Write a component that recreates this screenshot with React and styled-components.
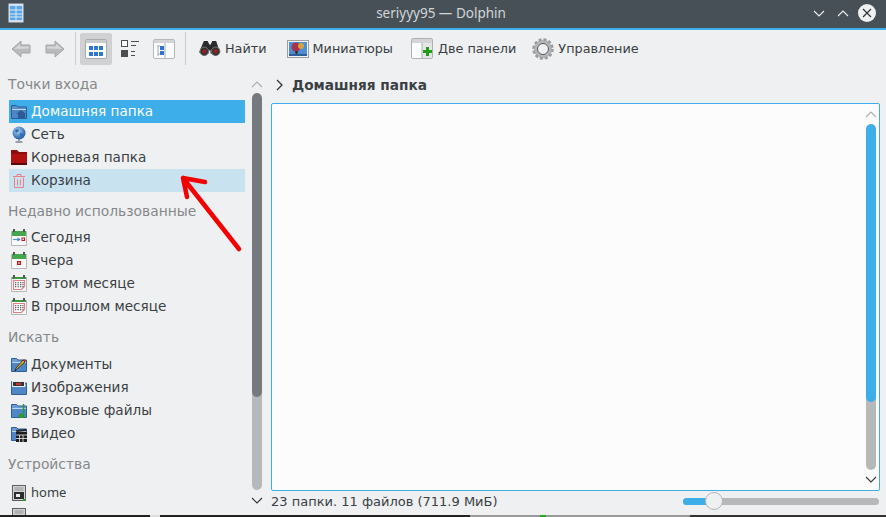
import React from "react";
import styled, { createGlobalStyle } from "styled-components";

const Global = createGlobalStyle`
  html, body { margin: 0; padding: 0; background: #eff0f1; overflow: hidden; }
  * { box-sizing: border-box; }
`;

const Page = styled.div`
  width: 886px; height: 517px; display: flex; flex-direction: column; overflow: hidden;
  font-family: "DejaVu Sans", "Noto Sans", sans-serif; font-size: 13px; color: #3a3f44;
`;
const Window = styled.div`
  position: relative; height: 515px; display: flex; flex-direction: column; background: #eff0f1;
`;
const TitleBar = styled.header`
  height: 30px; flex: none; display: flex; align-items: center; padding: 0 10px 2px 8px;
  background: #475057; border-bottom: 2px solid #3daee9;
`;
const Title = styled.div`
  flex: 1; text-align: center; color: #d3d6d8; font-family: "Noto Sans", sans-serif; font-size: 13.5px; padding-left: 45px;
`;
const WinControls = styled.div`display: flex; align-items: center; gap: 9px;`;
const ChevPair = styled.div`display: flex; align-items: center; gap: 12px;`;
const CloseBtn = styled.div`
  width: 18px; height: 18px; border-radius: 50%; background: #eff0f1;
  display: flex; align-items: center; justify-content: center;
`;
const Toolbar = styled.nav`
  height: 37px; flex: none; display: flex; align-items: center; padding: 0 0 0 11px; font-size: 12.8px;
`;
const NavBtn = styled.div`
  width: 20px; height: 20px; margin-right: ${p => p.$mr}px; display: flex; align-items: center;
`;
const Sep = styled.div`width: 1px; height: 33px; background: #c8cacc; margin: 0 ${p => p.$r}px 0 ${p => p.$l}px;`;
const ViewBtn = styled.div`
  width: 32px; height: 32px; border-radius: 2px; display: flex; align-items: center; justify-content: center;
  background: ${p => p.$active ? "#d0d1d3" : "transparent"}; margin-right: ${p => p.$mr}px;
`;
const TextBtn = styled.div`
  display: flex; align-items: center; gap: ${p => p.$gap}px; margin-right: ${p => p.$mr}px; white-space: nowrap;
`;
const BtnLabel = styled.span`padding-bottom: 1px;`;
const Body = styled.div`flex: 1; min-height: 0; display: flex; padding-top: 8px;`;
const Sidebar = styled.aside`
  width: 250px; flex: none; padding-left: 8px; padding-right: 5px; overflow: hidden;
`;
const Heading = styled.div`
  height: ${p => p.$h}px; line-height: 18px; padding-top: ${p => p.$pt}px; color: #85888b; font-size: 13.85px;
`;
const Row = styled.div`
  height: 23px; display: flex; align-items: center; gap: 4px; margin-left: 1px; padding-left: 2px; white-space: nowrap;
  font-family: ${p => p.$latin ? '"Noto Sans", sans-serif' : "inherit"};
  font-size: ${p => p.$latin ? 13 : 13.6}px;
  background: ${p => p.$sel ? "#3daee9" : p.$hover ? "#c9e2f0" : "transparent"};
  color: ${p => p.$sel ? "#fcfcfc" : "#3a3f44"};
`;
const RowLabel = styled.span`padding-bottom: 2px;`;
const ScrollCol = styled.div`
  width: ${p => p.$w}px; flex: none; display: flex; flex-direction: column; align-items: center;
  margin-top: ${p => p.$mt || 0}px;
`;
const Arrow = styled.div`
  height: ${p => p.$h}px; padding-bottom: ${p => p.$pb || 0}px; flex: none; display: flex; align-items: center; justify-content: center;
`;
const Track = styled.div`
  flex: 1; width: 10px; border-radius: 5px; background: #b7b8ba; overflow: hidden;
`;
const Thumb = styled.div`
  width: 10px; height: ${p => p.$h}px; border-radius: 5px; background: ${p => p.$c};
`;
const Main = styled.main`
  width: 609px; flex: none; margin-left: 7px; padding-top: 1px; display: flex; flex-direction: column;
`;
const PathBar = styled.div`
  height: 18px; flex: none; display: flex; align-items: center; gap: 9px; padding-left: 5px; margin-bottom: 9px;
  font-weight: 700; font-size: 13.7px; color: #3a3f44;
`;
const Frame = styled.div`
  height: 388px; flex: none; background: #fcfcfc; border: 1px solid #3daee9; border-radius: 2px;
  display: flex; justify-content: flex-end; padding: 1px 0 1px 0;
`;
const Status = styled.div`height: 20px; flex: none; display: flex; align-items: center; padding-right: 1px;`;
const StatusText = styled.div`flex: 1;`;
const Slider = styled.div`position: relative; width: 196px; height: 7px; border-radius: 4px; background: #b7b8ba;`;
const SliderFill = styled.div`width: 26px; height: 7px; border-radius: 4px 0 0 4px; background: #3daee9;`;
const Knob = styled.div`
  position: absolute; left: 22px; top: -6px; width: 18px; height: 18px; border-radius: 50%;
  background: #eff0f1; border: 1px solid #b3b5b6;
`;
const Overlay = styled.svg`position: absolute; left: 175px; top: 170px; pointer-events: none;`;
const Strip = styled.div`
  flex: 1; background: linear-gradient(90deg, #222 0 150px, #ddd 150px 160px, #222 160px 470px, #999 470px 540px, #2a2 540px 546px, #999 546px 690px, #333 690px 886px);
`;

const Chev = ({ up, c = "#31363b", w = 12 }) => (
  <svg width={w} height="7" viewBox="0 0 12 7"><path d={up ? "M1 6L6 1l5 5" : "M1 1l5 5 5-5"} fill="none" stroke={c} strokeWidth="1.1" /></svg>
);
const NavArrow = ({ flip }) => (
  <svg width="20" height="18" viewBox="0 0 20 18" style={{ transform: flip ? "scaleX(-1)" : "none" }}>
    <path d="M1 9L10 1v4h9v8h-9v4z" fill="#b9babb" stroke="#a5a6a8" strokeWidth="1" />
    <path d="M3 9l6-5v2.500h9v2z" fill="#d6d7d8" />
  </svg>
);
const IconsView = () => (
  <svg width="22" height="20" viewBox="0 0 22 20">
    <rect x=".5" y=".5" width="21" height="19" rx="1.500" fill="#fcfcfc" stroke="#a9abad" />
    <rect x="1" y="1" width="20" height="3" fill="#c9cbcd" />
    {[4, 9, 14].map(x => [7, 13].map(y => <rect key={x + "" + y} x={x} y={y} width="4" height="4" fill="#2f76d2" />))}
  </svg>
);
const DetailsView = () => (
  <svg width="18" height="18" viewBox="0 0 18 18">
    <rect x=".5" y=".5" width="6" height="6" fill="#fcfcfc" stroke="#4d4d4d" />
    <rect x="0" y="10" width="7" height="7" fill="#4d4d4d" />
    <path d="M10 1.500h8M10 5.500h5M10 11.500h4M10 15.500h4" stroke="#4d4d4d" strokeWidth="1" />
  </svg>
);
const ColumnsView = () => (
  <svg width="22" height="20" viewBox="0 0 22 20">
    <rect x=".5" y=".5" width="21" height="19" rx="1.500" fill="#fcfcfc" stroke="#b5b7b9" />
    <rect x="1" y="1" width="20" height="3" fill="#d4d5d7" />
    <path d="M5 6v11M5 7h2M5 15h2M12 4v15" stroke="#a9abad" fill="none" />
    <rect x="7" y="7" width="4" height="4" fill="#2f76d2" /><rect x="7" y="12" width="4" height="4" fill="#2f76d2" />
  </svg>
);
const Binoculars = () => (
  <svg width="22" height="17" viewBox="0 0 23 18">
    <path d="M5 1h4l2 4h1l2-4h4l4 12-5 4-5-3v-3h-2v3l-5 3-5-4z" fill="#2b2b2e" />
    <circle cx="5.500" cy="12" r="4.500" fill="#333" stroke="#777" /><circle cx="17.500" cy="12" r="4.500" fill="#333" stroke="#777" />
    <circle cx="5.500" cy="12" r="2.200" fill="#a11c22" /><circle cx="17.500" cy="12" r="2.200" fill="#a11c22" />
  </svg>
);
const Preview = () => (
  <svg width="22" height="18" viewBox="0 0 22 18">
    <rect x=".5" y=".5" width="21" height="17" fill="#f4f4f4" stroke="#9c9ea0" />
    <rect x="2" y="2" width="18" height="14" fill="#4a8fd6" />
    <circle cx="9" cy="7" r="4.500" fill="#a8324a" /><circle cx="14" cy="6" r="3" fill="#d8a13c" />
    <path d="M8 11l1 5h1l1-5" fill="#3a2a2a" /><path d="M2 14h18v2H2z" fill="#2f5f96" />
  </svg>
);
const TwoPanels = () => (
  <svg width="22" height="22" viewBox="0 0 22 22">
    <rect x=".5" y=".5" width="21" height="20" rx="1.500" fill="#fcfcfc" stroke="#aeb0b2" />
    <rect x="1" y="1" width="20" height="4" fill="#d4d5d7" /><rect x="11" y="5" width="10" height="15" fill="#e4e5e6" />
    <path d="M11 5v15" stroke="#aeb0b2" />
    <path d="M15 9h3v3h3v3h-3v3h-3v-3h-3v-3h3z" fill="#1f9d18" />
  </svg>
);
const Gear = () => (
  <svg width="22" height="22" viewBox="0 0 22 22">
    <circle cx="11" cy="11" r="7.500" fill="none" stroke="#b4b6b8" strokeWidth="3.500" />
    <circle cx="11" cy="11" r="9.500" fill="none" stroke="#9a9c9e" strokeWidth="2.500" strokeDasharray="3 2" />
    <circle cx="11" cy="11" r="5.500" fill="none" stroke="#55585a" strokeWidth="1" />
  </svg>
);
const Folder = ({ children, c = "#6a9dd6", d = "#2f5f96" }) => (
  <svg width="16" height="16" viewBox="0 0 16 16">
    <path d="M.5 1.500h5l1.500 1.500h8.500v11.500H.500z" fill={c} stroke={d} />
    <path d="M1 6h14v8H1z" fill="#4f86c6" />
    <path d="M1 5.500h14" stroke="#bcd8ef" />
    {children}
  </svg>
);
const HomeIcon = () => <Folder c="#5a8fca" d="#2c5a92"><path d="M10 6l5 4h-1v4H7v-4H5z" fill="#2c5a92" /></Folder>;
const Globe = () => (
  <svg width="16" height="17" viewBox="0 0 16 17">
    <defs><radialGradient id="g" cx=".4" cy=".35" r=".7"><stop offset="0" stopColor="#a9d2f3" /><stop offset="1" stopColor="#17509c" /></radialGradient></defs>
    <circle cx="8" cy="7" r="6.500" fill="url(#g)" />
    <path d="M4 4l3-1 1 2-3 2zM9 7l3 1-1 3-2-1z" fill="#2a6fb4" />
    <path d="M8 13v2M4.500 16h7" stroke="#7a8794" strokeWidth="1.500" />
  </svg>
);
const RedFolder = () => (
  <svg width="16" height="15" viewBox="0 0 16 15">
    <path d="M0 0h6l2 2h8v13H0z" fill="#8d0d0d" /><path d="M0 4h16v9H0z" fill="#b01212" /><path d="M0 13h16v2H0z" fill="#5c0808" />
  </svg>
);
const Trash = () => (
  <svg width="16" height="16" viewBox="0 0 16 16" fill="none" stroke="#ee7e88" strokeWidth="1">
    <path d="M3.500 4.500v10h9v-10M2 3.500h12M6 3V1.500h4V3M6.500 6.500v6M9.500 6.500v6" />
  </svg>
);
const Cal = ({ kind }) => (
  <svg width="16" height="17" viewBox="0 0 16 17">
    <path d="M.5 2.500h15v14H.500z" fill="#fafafa" stroke="#b4b6b8" />
    <rect x="1" y="2" width="14" height="5" fill={kind === "month" ? "#fafafa" : "#46a84e"} />
    {kind === "month" && <rect x="1" y="2" width="14" height="2" fill="#3a9a42" />}
    <rect x="2" y="0" width="2" height="3" fill="#555" /><rect x="12" y="0" width="2" height="3" fill="#555" />
    {kind === "today" && <><path d="M2 10.500h7" stroke="#5a97dc" strokeWidth="1.200" /><path d="M6.500 8.500l3 2-3 2z" fill="#3a7fd0" /><rect x="10.500" y="8.500" width="3.500" height="3.500" fill="#c11" /><rect x="11.500" y="9.500" width="1.500" height="1.500" fill="#fff" /></>}
    {kind === "yest" && <><rect x="6" y="9" width="4" height="4" fill="#c11" /><rect x="7.300" y="10.300" width="1.400" height="1.400" fill="#fff" /></>}
    {kind === "month" && <><path d="M2.500 5.500h11v6l-3 3h-8z" fill="#fff" stroke="#e07f86" strokeWidth="1.200" />{[4, 6.500, 9, 11.300].map(x => [7, 9, 11].map(y => <rect key={x + "-" + y} x={x} y={y} width="1.300" height="1.300" fill="#666" />))}</>}
  </svg>
);
const Docs = () => <Folder><path d="M4 14l1-3 7-8 2 2-8 7z" fill="#e0b020" stroke="#222" strokeWidth=".8" /><path d="M12 3l1-1 2 2-1 1z" fill="#c22" /></Folder>;
const Images = () => <Folder><rect x="1" y="1" width="13" height="6" fill="#eee" /><rect x="2" y="2" width="11" height="4" fill="#333" /><rect x="5" y="3" width="5" height="2" fill="#c33" /></Folder>;
const Music = () => <Folder><path d="M12.500 1v11" stroke="#2a9a2a" strokeWidth="1.500" /><ellipse cx="10.500" cy="13" rx="3" ry="2" fill="#2a9a2a" /></Folder>;
const Video = () => <Folder><rect x="5" y="6" width="11" height="10" fill="#1d1d1d" /><path d="M5 9h11M5 12.500h11M8.500 9v7M12 9v7" stroke="#eee" strokeWidth=".8" /><path d="M5 4l10-1 .5 2-10 1z" fill="#222" /></Folder>;
const Drive = () => (
  <svg width="14" height="16" viewBox="0 0 14 16" style={{ marginLeft: 1, marginRight: 1 }}>
    <rect x=".5" y=".5" width="13" height="15" fill="#d3d4d5" stroke="#5c5e60" />
    <rect x="2" y="7" width="10" height="7" fill="#2d2d2d" /><rect x="4" y="9" width="4" height="3" fill="#eee" />
    <rect x="11" y="14" width="3" height="2" fill="#2a9a2a" /><path d="M2.500 3h9M2.500 5h9" stroke="#909294" />
  </svg>
);

const SideRow = ({ icon, children, ...rest }) => <Row {...rest}>{icon}<RowLabel>{children}</RowLabel></Row>;

export default function App() {
  return (
    <Page>
      <Global />
      <Window>
        <TitleBar>
          <svg width="16" height="20" viewBox="0 0 16 20">
            <rect x=".5" y=".5" width="15" height="19" rx="1" fill="#cfe2f4" stroke="#8d9499" />
            <rect x="2" y="3" width="12" height="14" fill="#59a5e6" />
            <path d="M2 7h12M2 11h12M2 14h12M8 3v14" stroke="#dcecf9" />
          </svg>
          <Title>seriyyy95 — Dolphin</Title>
          <WinControls>
            <ChevPair>
              <Chev c="#eff0f1" />
              <Chev up c="#eff0f1" />
            </ChevPair>
            <CloseBtn>
              <svg width="10" height="10" viewBox="0 0 10 10"><path d="M1 1l8 8M9 1L1 9" stroke="#31363b" strokeWidth="1.200" /></svg>
            </CloseBtn>
          </WinControls>
        </TitleBar>
        <Toolbar>
          <NavBtn $mr={14}><NavArrow /></NavBtn>
          <NavBtn $mr={10}><NavArrow flip /></NavBtn>
          <Sep $l={0} $r={4} />
          <ViewBtn $active $mr={2}><IconsView /></ViewBtn>
          <ViewBtn $mr={2}><DetailsView /></ViewBtn>
          <ViewBtn $mr={0}><ColumnsView /></ViewBtn>
          <Sep $l={5} $r={13} />
          <TextBtn $gap={4} $mr={20}><Binoculars /><BtnLabel>Найти</BtnLabel></TextBtn>
          <TextBtn $gap={4} $mr={18}><Preview /><BtnLabel>Миниатюры</BtnLabel></TextBtn>
          <TextBtn $gap={5} $mr={16}><TwoPanels /><BtnLabel>Две панели</BtnLabel></TextBtn>
          <TextBtn $gap={4} $mr={0}><Gear /><BtnLabel>Управление</BtnLabel></TextBtn>
        </Toolbar>
        <Body>
          <Sidebar>
            <Heading $h={25} $pt={0}>Точки входа</Heading>
            <SideRow $sel icon={<HomeIcon />}>Домашняя папка</SideRow>
            <SideRow icon={<Globe />}>Сеть</SideRow>
            <SideRow icon={<RedFolder />}>Корневая папка</SideRow>
            <SideRow $hover icon={<Trash />}>Корзина</SideRow>
            <Heading $h={34} $pt={10}>Недавно использованные</Heading>
            <SideRow icon={<Cal kind="today" />}>Сегодня</SideRow>
            <SideRow icon={<Cal kind="yest" />}>Вчера</SideRow>
            <SideRow icon={<Cal kind="month" />}>В этом месяце</SideRow>
            <SideRow icon={<Cal kind="month" />}>В прошлом месяце</SideRow>
            <Heading $h={35} $pt={10}>Искать</Heading>
            <SideRow icon={<Docs />}>Документы</SideRow>
            <SideRow icon={<Images />}>Изображения</SideRow>
            <SideRow icon={<Music />}>Звуковые файлы</SideRow>
            <SideRow icon={<Video />}>Видео</SideRow>
            <Heading $h={36} $pt={10}>Устройства</Heading>
            <SideRow $latin icon={<Drive />}>home</SideRow>
            <SideRow icon={<Drive />}></SideRow>
          </Sidebar>
          <ScrollCol $w={14} $mt={1}>
            <Arrow $h={17}><Chev up c="#a9abad" /></Arrow>
            <Track><Thumb $h={304} $c="#767a7f" /></Track>
            <Arrow $h={25} $pb={5}><Chev /></Arrow>
          </ScrollCol>
          <Main>
            <PathBar>
              <svg width="7" height="12" viewBox="0 0 7 12"><path d="M1 1l5 5-5 5" fill="none" stroke="#31363b" strokeWidth="1.300" /></svg>
              Домашняя папка
            </PathBar>
            <Frame>
              <ScrollCol $w={16}>
                <Arrow $h={19}><Chev up c="#a9abad" /></Arrow>
                <Track><Thumb $h={278} $c="#3daee9" /></Track>
                <Arrow $h={19}><Chev /></Arrow>
              </ScrollCol>
            </Frame>
            <Status>
              <StatusText>23 папки. 11 файлов (711.9 МиБ)</StatusText>
              <Slider><SliderFill /><Knob /></Slider>
            </Status>
          </Main>
        </Body>
        <Overlay width="75" height="90" viewBox="0 0 75 90">
          <path d="M8 8l56 71M8 8l4 19M8 8l22 4" fill="none" stroke="#f30000" strokeWidth="4.500" strokeLinecap="round" />
        </Overlay>
      </Window>
      <Strip />
    </Page>
  );
}
